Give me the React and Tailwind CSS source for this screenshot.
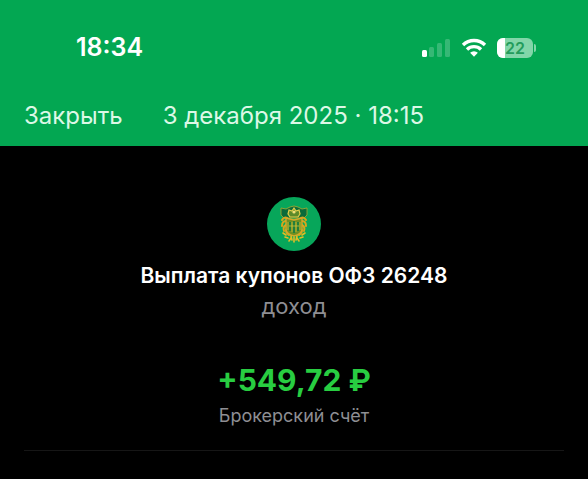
const operation = {
  date: "3 декабря 2025 · 18:15",
  title: "Выплата купонов ОФЗ 26248",
  type: "доход",
  amount: "+549,72 ₽",
  account: "Брокерский счёт",
};

function SignalIcon() {
  return (
    <svg width="30" height="20" viewBox="0 0 30 20" fill="#fff" aria-hidden="true">
      <rect x="1" y="12" width="5" height="7" rx="1.5" />
      <g opacity="0.2">
        <rect x="8" y="9" width="5" height="10" rx="1.5" />
        <rect x="16" y="5" width="5" height="14" rx="1.5" />
        <rect x="24" y="1" width="5" height="18" rx="1.5" />
      </g>
    </svg>
  );
}

function WifiIcon() {
  return (
    <svg width="26" height="20" viewBox="0 0 26 20" aria-hidden="true">
      <g fill="none" stroke="#fff" strokeWidth="3.4">
        <path d="M2 7a15.8 15.8 0 0 1 22 0" />
        <path d="M6 11.4a10.2 10.2 0 0 1 14 0" />
      </g>
      <path d="M9.1 14.8a5.8 5.8 0 0 1 7.8 0L13 18.8z" fill="#fff" />
    </svg>
  );
}

function Battery({ level }) {
  return (
    <div className="flex items-center gap-px">
      <div className="relative flex h-5 w-9 items-center justify-center overflow-hidden rounded-md bg-[#82d6a9]">
        <div
          className="absolute inset-y-0 left-0 bg-white"
          style={{ width: `${level}%` }}
        />
        <span className="relative text-base leading-5 font-semibold text-[#239c5c]">
          {level}
        </span>
      </div>
      <div className="h-2 w-0.5 rounded-r-full bg-[#82d6a9]" />
    </div>
  );
}

function Emblem() {
  return (
    <svg
      className="size-14"
      viewBox="0 0 56 56"
      role="img"
      aria-label="Минфин"
    >
      <circle cx="28" cy="28" r="27" fill="#07a65a" />
      {/* wings and crown */}
      <path
        d="M15 12l5 1 4-2 4-1 4 1 4 2 5-1v7l-3 3H18l-3-3z"
        fill="#0b6b3a"
        stroke="#a9a92e"
        strokeWidth="0.8"
      />
      <path
        d="M22 18l1-4 3 1 2-3 2 3 3-1 1 4-2 3h-8z"
        fill="#5c8a2a"
        stroke="#e3cf4a"
        strokeWidth="1.2"
      />
      <circle cx="28" cy="16" r="1.6" fill="#f3e27a" />
      <g fill="none" stroke="#d7a51c" strokeWidth="2" strokeLinecap="round">
        <path d="M21 22c-2-1-4 0-5 2M20 25c-3 0-4 2-4 5M20 29c-2 1-3 3-2 6M20 34c0 2 1 4 3 5" />
        <path d="M35 22c2-1 4 0 5 2M36 25c3 0 4 2 4 5M36 29c2 1 3 3 2 6M36 34c0 2-1 4-3 5" />
      </g>
      <path
        d="M20 22l8 2 8-2v11c0 4-4 6-8 7-4-1-8-3-8-7z"
        fill="#6f8f22"
        stroke="#d6a82a"
        strokeWidth="1.4"
      />
      <path
        d="M24 26v9M28 25v12M32 26v9"
        stroke="#0f7a42"
        strokeWidth="1.6"
      />
      <path
        d="M22 26v8M26 26v10M30 26v10M34 26v8M23 30h10"
        fill="none"
        stroke="#c9c23c"
        strokeWidth="0.8"
      />
      {/* laurel */}
      <g fill="none" stroke="#e3bd24" strokeWidth="1.6" strokeLinecap="round">
        <path d="M17 37l3 2M19 41l3 1M23 45l2-3M39 37l-3 2M37 41l-3 1M33 45l-2-3" />
        <path d="M25 40l1 4M28 41v5M31 40l-1 4" />
      </g>
    </svg>
  );
}

export default function App() {
  return (
    <div className="min-h-screen bg-black font-['Inter',sans-serif] text-white">
      <header className="bg-[#03a752] pt-8 pb-3.5">
        {/* Status bar */}
        <div className="flex h-8 items-center justify-between pr-13 pl-19">
          <span className="text-[25px] font-semibold">18:34</span>
          <div className="flex items-center gap-2.5">
            <SignalIcon />
            <WifiIcon />
            <Battery level={22} />
          </div>
        </div>

        {/* Navigation */}
        <div className="mt-9 flex h-8 items-center gap-10 px-6 text-2xl text-[#dcf8e6]">
          <button type="button">Закрыть</button>
          <h1>{operation.date}</h1>
        </div>
      </header>

      <main className="px-6 pt-12.5">
        <section className="flex flex-col items-center border-b border-[#161616] pb-5 text-center">
          <Emblem />
          <h2 className="mt-2.5 text-[21px] leading-7 font-semibold">
            {operation.title}
          </h2>
          <p className="text-[22px] leading-8 text-[#8e8e93]">
            {operation.type}
          </p>
          <p className="mt-10 text-3xl font-bold text-[#28cd41]">
            {operation.amount}
          </p>
          <p className="mt-1 text-lg leading-7 text-[#8e8e93]">
            {operation.account}
          </p>
        </section>
      </main>
    </div>
  );
}
